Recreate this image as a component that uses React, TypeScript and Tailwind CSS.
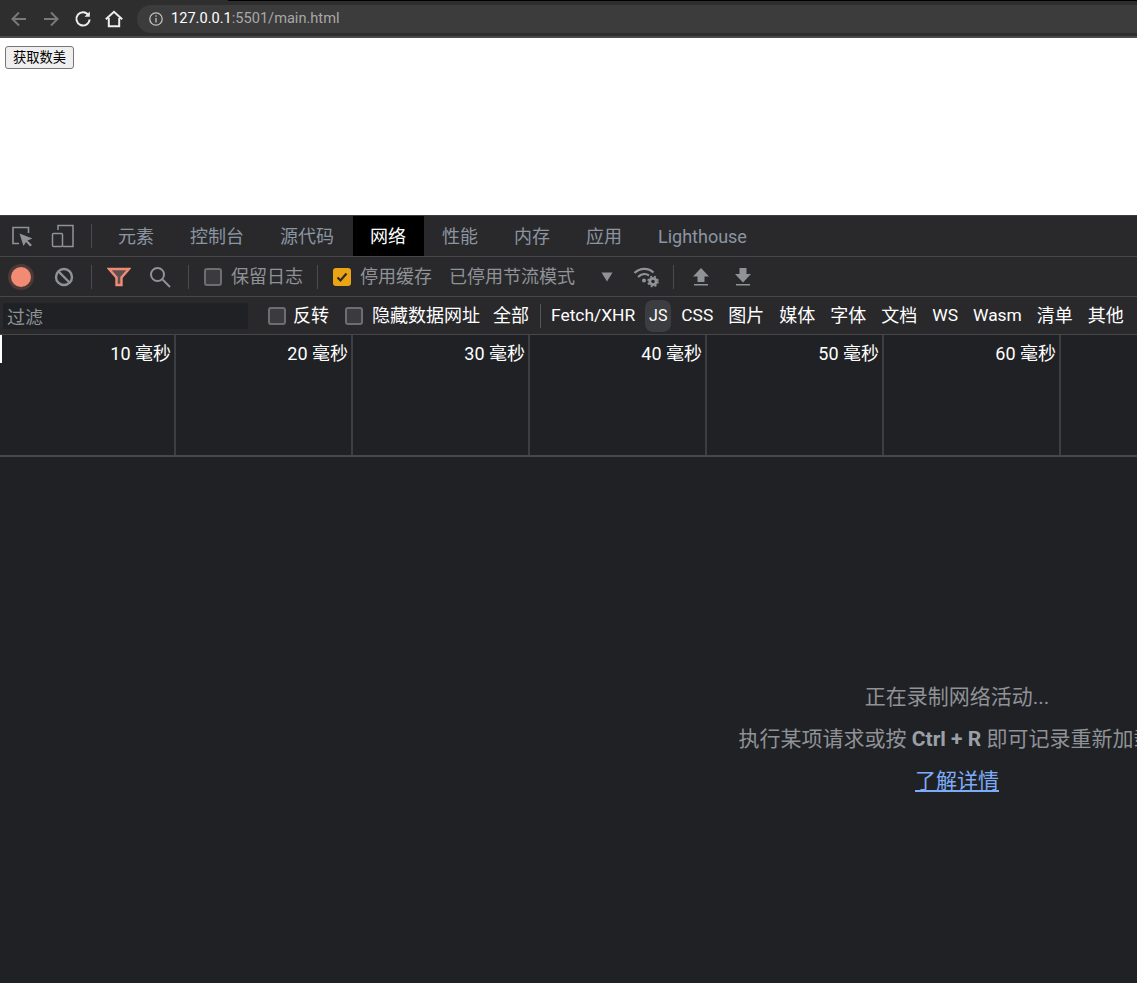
import React from "react";

const font = "font-['Roboto','Noto_Sans_CJK_SC',sans-serif]";

function Sep({ h = "h-6", c = "bg-[#4a4b4e]", m = "" }: { h?: string; c?: string; m?: string }) {
  return <div className={`w-px shrink-0 ${h} ${c} ${m}`} />;
}

function Check({ checked = false, className = "" }: { checked?: boolean; className?: string }) {
  if (checked) {
    return (
      <div className={`w-[18px] h-[18px] rounded-[3px] bg-[#eba414] flex items-center justify-center shrink-0 ${className}`}>
        <svg width="14" height="14" viewBox="0 0 14 14" fill="none">
          <path d="M2.5 7.5L5.5 10.5L11.5 3.5" stroke="#2a2a2c" strokeWidth="2.2" />
        </svg>
      </div>
    );
  }
  return <div className={`w-[18px] h-[18px] rounded-[3px] bg-[#3b3b3d] border-2 border-[#6d6e71] shrink-0 ${className}`} />;
}

function Tab({ label, active = false, latin = false }: { label: string; active?: boolean; latin?: boolean }) {
  return (
    <div className={`h-10 flex items-center text-[18px] ${latin ? "" : "pt-px"} ${active ? "ml-px pl-[17px] pr-[18px] bg-black text-white" : "px-[18px] text-[#8b95a1]"}`}>
      {label}
    </div>
  );
}

const filters = [
  { t: "Fetch/XHR", c: "text-[17.400px] px-[5px]" },
  { t: "JS", c: "text-[16px] w-[26px] justify-center bg-[#3c3d40]" },
  { t: "CSS", c: "text-[17.400px] px-[5px]" },
  { t: "图片", c: "px-[5px]" },
  { t: "媒体", c: "px-[5px]" },
  { t: "字体", c: "px-[5px]" },
  { t: "文档", c: "px-[5px]" },
  { t: "WS", c: "text-[17.400px] px-[5px]" },
  { t: "Wasm", c: "text-[17.400px] px-[5px]" },
  { t: "清单", c: "px-[5px]" },
  { t: "其他", c: "px-[5px]" },
];
const ticks = ["10 毫秒", "20 毫秒", "30 毫秒", "40 毫秒", "50 毫秒", "60 毫秒"];

export default function App() {
  return (
    <div className={`w-[1137px] h-[983px] overflow-hidden flex flex-col bg-white ${font}`}>
      {/* browser bar */}
      <div className="h-px shrink-0 flex">
        <div className="w-[228px] bg-[#2e2e2e]" />
        <div className="flex-1 bg-black" />
      </div>
      <div className="h-[37px] shrink-0 bg-[#2e2e2e] border-b-2 border-[#4b4b4b] flex items-center pl-[9px]">
        <svg width="20" height="20" viewBox="0 0 20 20" fill="none" stroke="#77797b" strokeWidth="2">
          <path d="M17 10H3.5M10 3.5L3.5 10L10 16.500" />
        </svg>
        <svg className="ml-[12px]" width="20" height="20" viewBox="0 0 20 20" fill="none" stroke="#77797b" strokeWidth="2">
          <path d="M3 10H16.500M10 3.500L16.500 10L10 16.500" />
        </svg>
        <svg className="ml-[12px]" width="20" height="20" viewBox="0 0 20 20" fill="none" stroke="#eeeeee" strokeWidth="2">
          <path d="M15.500 6.200A6.600 6.600 0 1 0 16.600 10.500" />
          <path d="M16.800 2.500V7.800H11.500Z" fill="#eeeeee" stroke="none" />
        </svg>
        <svg className="ml-[11px]" width="20" height="20" viewBox="0 0 20 20" fill="none" stroke="#eeeeee" strokeWidth="2">
          <path d="M1.800 10.300L10 2.800L18.200 10.300M4.800 9V17.200H15.200V9" />
        </svg>
        <div className="ml-[13px] h-[28px] flex-1 rounded-l-full bg-[#3c3c3c] flex items-center pl-[11px]">
          <svg width="16" height="16" viewBox="0 0 16 16" fill="none" stroke="#c2c2c2" strokeWidth="1.300">
            <circle cx="8" cy="8" r="6.200" />
            <path d="M8 7V11.500M8 4.300V5.800" />
          </svg>
          <div className="ml-[7px] text-[14.600px] text-[#a8a8a8]">
            <span className="text-white">127.0.0.1</span>:5501/main.html
          </div>
        </div>
      </div>

      {/* page */}
      <div className="h-[177px] shrink-0 bg-white pt-2 pl-[5px]">
        <button className="h-[23px] w-[69px] rounded-[3px] border border-[#767676] bg-[#efefef] text-[13.300px] text-black leading-none flex items-center justify-center">
          获取数美
        </button>
      </div>

      {/* devtools */}
      <div className="flex-1 flex flex-col bg-[#202125] border-t border-[#3d3d40] min-h-0">
        {/* tabs */}
        <div className="h-[41px] shrink-0 bg-[#29292c] border-b border-[#47474a] flex items-center pl-[10px]">
          <svg width="24" height="24" viewBox="0 0 24 24" fill="none">
            <path d="M9 19.500H3V3.500H18.500V9" stroke="#8f9296" strokeWidth="1.600" />
            <path d="M9.500 9.500L22.500 14.500L17.500 16.500L22 21L20 22.500L16 18L13.500 22Z" fill="#8f9296" />
          </svg>
          <svg className="ml-[17px]" width="24" height="24" viewBox="0 0 24 24" fill="none" stroke="#8f9296" strokeWidth="1.500">
            <path d="M7 6V1.500H22V22.500H12" />
            <rect x="1.500" y="9.500" width="10" height="13" rx="1" />
          </svg>
          <Sep m="ml-[16px] mr-[8px]" />
          <Tab label="元素" />
          <Tab label="控制台" />
          <Tab label="源代码" />
          <Tab label="网络" active />
          <Tab label="性能" />
          <Tab label="内存" />
          <Tab label="应用" />
          <Tab label="Lighthouse" latin />
        </div>

        {/* toolbar */}
        <div className="h-10 shrink-0 bg-[#29292c] border-b border-[#47474a] flex items-center pl-[11px] text-[18px] text-[#8f9296]">
          <div className="w-5 h-5 rounded-full bg-[#f28b74] ring-[3px] ring-[#4d3a36] shrink-0" />
          <svg className="ml-[23px] shrink-0" width="20" height="20" viewBox="0 0 20 20" fill="none" stroke="#8f9296" strokeWidth="2.400">
            <circle cx="10" cy="10" r="8" />
            <path d="M4.500 4.500L15.500 15.500" />
          </svg>
          <Sep m="ml-[17px]" />
          <svg className="ml-[15px] shrink-0" width="24" height="20" viewBox="0 0 24 20" fill="none" stroke="#f28b74" strokeWidth="2.400">
            <path d="M2 2H22L14.500 10.500V18H9.500V10.500Z" fill="#5b5150" />
          </svg>
          <svg className="ml-[17px] shrink-0" width="24" height="24" viewBox="0 0 24 24" fill="none" stroke="#8f9296" strokeWidth="2">
            <circle cx="9.500" cy="9.500" r="6.500" />
            <path d="M14.500 14.500L22 22" />
          </svg>
          <Sep m="ml-[16px]" />
          <Check className="ml-[15px]" />
          <span className="ml-[9px] whitespace-nowrap">保留日志</span>
          <Sep m="ml-[14px]" />
          <Check checked className="ml-[15px]" />
          <span className="ml-[9px] whitespace-nowrap">停用缓存</span>
          <span className="ml-[17px] whitespace-nowrap">已停用节流模式</span>
          <svg className="ml-[26px] shrink-0" width="12" height="10" viewBox="0 0 12 10" fill="#8f9296">
            <path d="M0.500 0.500H11.500L6 9.500Z" />
          </svg>
          <svg className="ml-[20px] shrink-0" width="26" height="22" viewBox="0 0 26 22" fill="none" stroke="#8f9296" strokeWidth="2.200">
            <path d="M1.500 7C7 1.500 15.500 1.500 20.500 6.500" />
            <path d="M5 11C8.500 7.500 13 7.500 16 9.500" />
            <circle cx="11" cy="14.500" r="2" fill="#8f9296" stroke="none" />
            <circle cx="20" cy="15.500" r="3.200" strokeWidth="2.800" />
            <circle cx="20" cy="15.500" r="5" strokeWidth="1.500" strokeDasharray="2 2" />
          </svg>
          <Sep m="ml-[14px]" />
          <svg className="ml-[18px] shrink-0" width="18" height="20" viewBox="0 0 18 20" fill="#8f9296">
            <path d="M9 1L17 9.500H12.500V15H5.500V9.500H1Z" />
            <rect x="2" y="17" width="14" height="1.500" />
          </svg>
          <svg className="ml-[24px] shrink-0" width="18" height="20" viewBox="0 0 18 20" fill="#8f9296">
            <path d="M9 15.500L17 7H12.500V1H5.500V7H1Z" />
            <rect x="2" y="17" width="14" height="1.500" />
          </svg>
        </div>

        {/* filter row */}
        <div className="h-[38px] shrink-0 bg-[#29292c] border-b border-[#47474a] flex items-center pl-[3px] text-[18px] text-white">
          <div className="w-[245px] h-[26px] bg-[#202125] text-[#8f9296] pl-[4px] pt-[4px] flex items-center leading-none shrink-0">过滤</div>
          <Check className="ml-[20px]" />
          <span className="ml-[7px] whitespace-nowrap">反转</span>
          <Check className="ml-[16px]" />
          <span className="ml-[9px] whitespace-nowrap">隐藏数据网址</span>
          <span className="ml-[13px] whitespace-nowrap">全部</span>
          <Sep m="ml-[11px] mr-[5px]" c="bg-[#55565a]" />
          <div className="flex items-center gap-[5px]">
            {filters.map((f) => (
              <div key={f.t} className={`h-[32px] flex items-center whitespace-nowrap rounded-[8px] ${f.c}`}>
                {f.t}
              </div>
            ))}
          </div>
        </div>

        {/* timeline */}
        <div className="h-[122px] shrink-0 relative flex border-b-2 border-[#47484b]">
          <div className="absolute left-0 top-0 h-[28px] w-[2px] bg-white" />
          {ticks.map((t, i) => (
            <div
              key={t}
              className={`${i === 0 ? "w-[176px]" : "w-[177px]"} shrink-0 border-r-2 border-[#3d3e41] pr-[3px] pt-[6px] text-right text-[18px] leading-[26px] text-white`}
            >
              {t}
            </div>
          ))}
        </div>

        {/* empty state */}
        <div className="flex-1 min-h-0 pt-[219px]">
          <div className="ml-[738px] w-[438px] flex flex-col items-center text-[21px] leading-[42px] text-[#8f9296] whitespace-nowrap">
            <div>正在录制网络活动...</div>
            <div>
              执行某项请求或按 <b className="font-bold text-[#9aa0a6]">Ctrl + R</b> 即可记录重新加载。
            </div>
            <div className="text-[#7cacf8] underline">了解详情</div>
          </div>
        </div>
      </div>
    </div>
  );
}
